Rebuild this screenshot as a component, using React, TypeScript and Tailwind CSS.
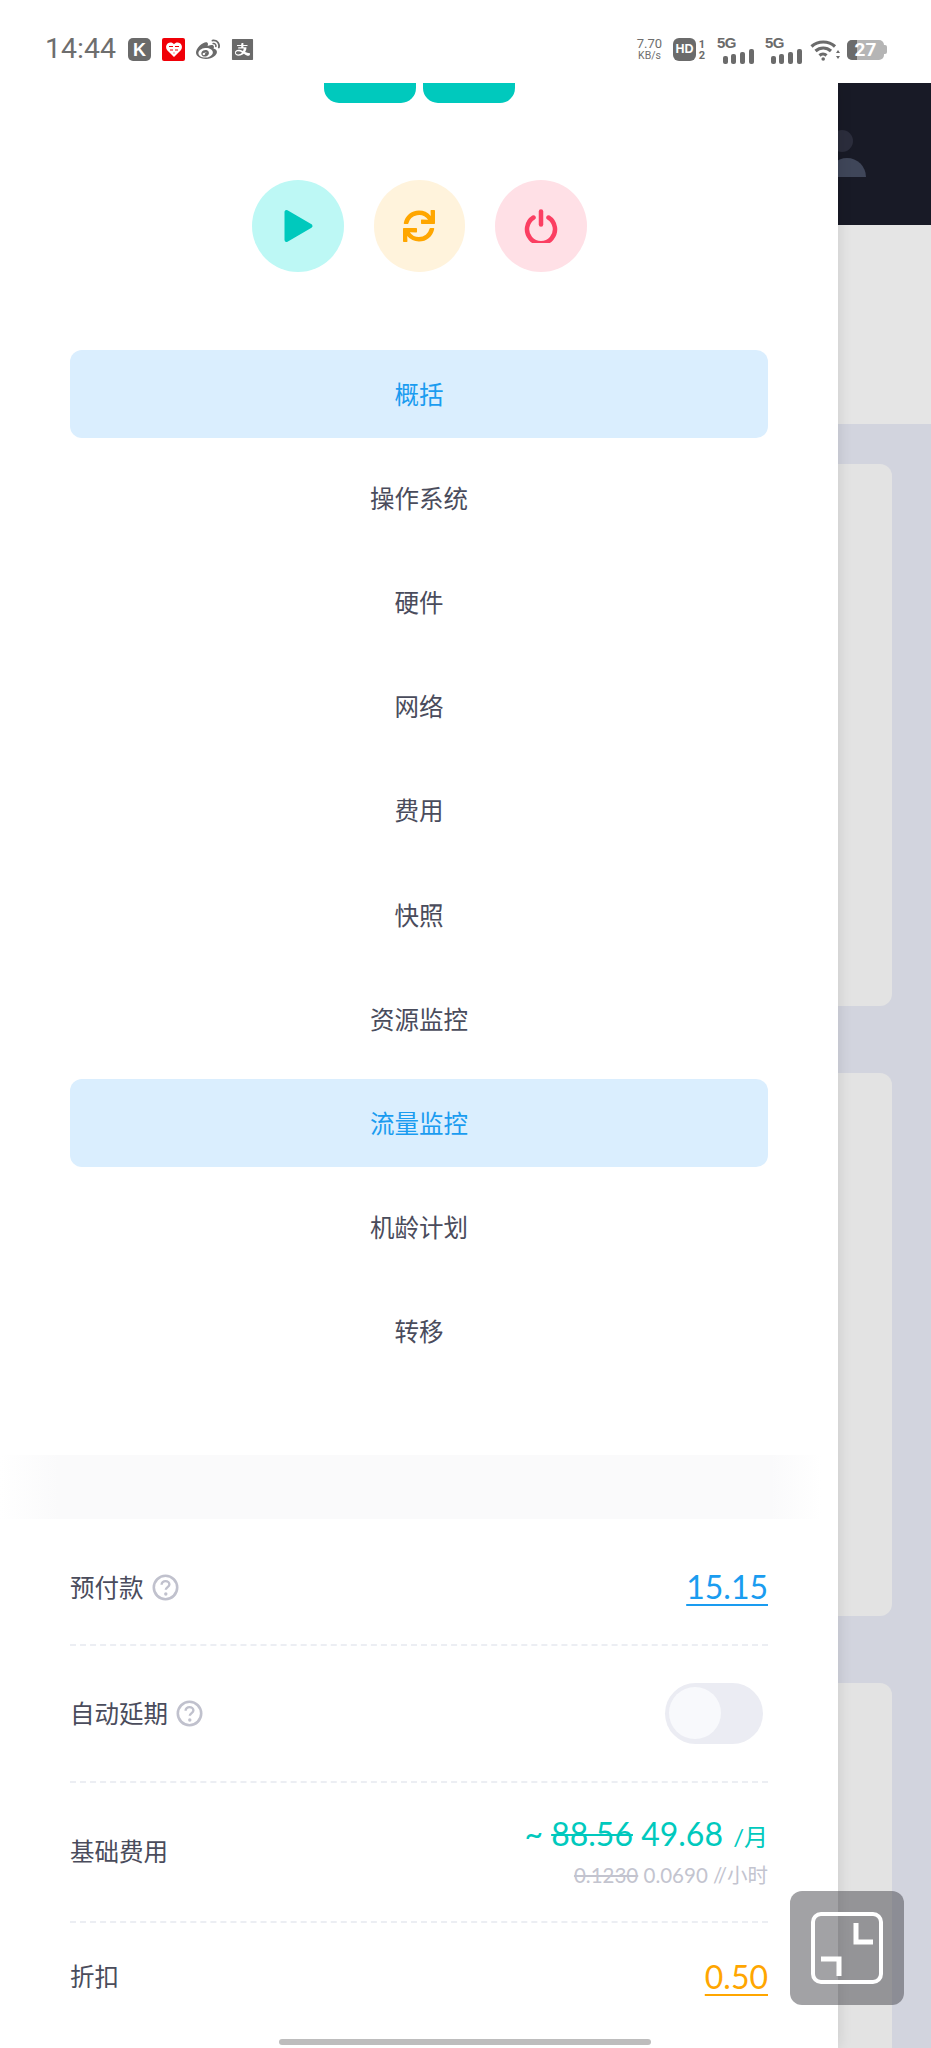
import React from "react";
import { FaSync, FaWeibo } from "react-icons/fa";
import { AiFillAlipaySquare } from "react-icons/ai";

const CJK = "font-['Noto_Sans_CJK_SC','Noto_Sans',sans-serif]";

const menu = ["概括", "操作系统", "硬件", "网络", "费用", "快照", "资源监控", "流量监控", "机龄计划", "转移"];
const activeItems = ["概括", "流量监控"];

function Help() {
  return (
    <svg width="27" height="27" viewBox="0 0 27 27" fill="none" className="shrink-0">
      <circle cx="13.5" cy="13.5" r="11.7" stroke="#c0c1cd" strokeWidth="2.6" />
      <path d="M9.6 10.8c0-2.2 1.7-3.7 3.9-3.7s3.9 1.4 3.9 3.4c0 2.6-3.6 2.7-3.6 5.3" stroke="#c0c1cd" strokeWidth="2.4" fill="none" />
      <circle cx="13.8" cy="20" r="1.7" fill="#c0c1cd" />
    </svg>
  );
}

function Bars() {
  return (
    <svg width="31" height="15" viewBox="0 0 31 15" fill="#6b6b6b">
      <rect x="0" y="7" width="5" height="8" rx="2" />
      <rect x="8" y="5" width="5" height="10" rx="2" />
      <rect x="17" y="3" width="5" height="12" rx="2" />
      <rect x="26" y="0" width="5" height="15" rx="2" />
    </svg>
  );
}

function Signal() {
  return (
    <div className="flex w-[40px] flex-col items-end">
      <span className="mr-[18px] font-['Liberation_Sans',sans-serif] text-[15px] leading-[13px] font-bold tracking-[-0.5px] text-[#6b6b6b]">5G</span>
      <Bars />
    </div>
  );
}

function StatusBar() {
  return (
    <div className="flex h-[83px] items-center justify-between bg-white pt-[16px] pr-[44px] pl-[45px] font-['Roboto',sans-serif]">
      <div className="flex items-center">
        <span className="w-[83px] text-[28.5px] leading-none text-[#6e6e6e]">14:44</span>
        <div className="flex items-center gap-[11px]">
          <div className="flex h-[23px] w-[23px] items-center justify-center rounded-[5px] bg-[#6a6a6a] font-['Liberation_Sans',sans-serif] text-[18px] leading-none font-bold text-white">K</div>
          <div className="flex h-[23px] w-[23px] items-center justify-center rounded-[2px] bg-[#f00008]">
            <svg width="16" height="15" viewBox="0 0 16 15" fill="#fff">
              <path d="M8 15 1.2 8.2C-.6 6.2-.2 2.6 2 1.2 4-.2 6.6.3 8 2.2 9.4.3 12-.2 14 1.2c2.2 1.4 2.6 5 .8 7z" />
              <path d="M3 4.5h4M9 4.5h4M4 8h3M9 8h3M7.5 11h1" stroke="#f00008" strokeWidth="1" />
            </svg>
          </div>
          <FaWeibo size={24} color="#6a6a6a" />
          <AiFillAlipaySquare size={27} color="#6a6a6a" className="-mx-[2px]" />
        </div>
      </div>
      <div className="flex items-center">
        <div className="mr-[10px] flex w-[27px] flex-col items-center leading-none text-[#6e6e6e]">
          <span className="text-[13px] leading-[12px]">7.70</span>
          <span className="text-[10.5px] leading-[11px]">KB/s</span>
        </div>
        <div className="flex h-[23px] w-[23px] items-center justify-center rounded-[6px] bg-[#6b6b6b] font-['Liberation_Sans',sans-serif] text-[12.5px] leading-none font-bold text-white">HD</div>
        <div className="mr-[8px] ml-[2px] flex w-[8px] flex-col items-center text-[11px] leading-[11px] font-bold text-[#6b6b6b]">
          <span>1</span>
          <span>2</span>
        </div>
        <Signal />
        <div className="w-[8px]" />
        <Signal />
        <svg width="30" height="22" viewBox="0 0 30 22" className="mr-[7px] ml-[8px]" fill="none" stroke="#6b6b6b" strokeWidth="3.2">
          <path d="M1.5 7.5c6.5-6 17-6 23.500 0" />
          <path d="M5.500 12c4.500-4 11-4 15.500 0" />
          <path d="M9.500 16.500c2-1.800 5-1.800 7 0" />
          <circle cx="13.200" cy="20" r="1.800" fill="#6b6b6b" stroke="none" />
          <path d="M28 11l2 3h-4zM28 20l-2-3h4z" fill="#6b6b6b" stroke="none" />
        </svg>
        <div className="flex items-center">
          <div className="relative flex h-[20px] w-[37px] items-center justify-center overflow-hidden rounded-[5px] bg-[#b5b5b5] text-[19px] leading-none font-bold text-white">
            <div className="absolute top-0 bottom-0 left-0 w-[10px] bg-[#6b6b6b]" />
            <span className="relative">27</span>
          </div>
          <div className="h-[9px] w-[3px] rounded-r-[2px] bg-[#b5b5b5]" />
        </div>
      </div>
    </div>
  );
}

function Actions() {
  return (
    <div className="mt-[77px] flex justify-center gap-[30px]">
      <div className="flex h-[92px] w-[92px] items-center justify-center rounded-full bg-[#bdf8f5]">
        <svg width="30" height="34" viewBox="0 0 30 34" className="ml-[3px]">
          <path d="M2.500 3v28l24-14z" fill="#00c9bd" stroke="#00c9bd" strokeWidth="4" strokeLinejoin="round" />
        </svg>
      </div>
      <div className="flex h-[92px] w-[91px] items-center justify-center rounded-full bg-[#fff3dc]">
        <FaSync size={32} color="#ffa600" />
      </div>
      <div className="flex h-[92px] w-[92px] items-center justify-center rounded-full bg-[#ffe0e6]">
        <svg width="34" height="34" viewBox="0 0 34 34" fill="none" stroke="#fb3f62" strokeWidth="4.500" strokeLinecap="round">
          <path d="M9.500 8.500a14 14 0 1 0 15 0" />
          <path d="M17 2.500v13" />
        </svg>
      </div>
    </div>
  );
}

function Row({ children, className }: { children: React.ReactNode; className: string }) {
  return <div className={`mx-[70px] flex items-center justify-between ${className}`}>{children}</div>;
}

function Label({ text, help }: { text: string; help?: boolean }) {
  return (
    <div className="flex items-center gap-[8px]">
      <span className={`text-[24.500px] leading-none text-[#4a4c5c] ${CJK}`}>{text}</span>
      {help && <Help />}
    </div>
  );
}

function Drawer() {
  return (
    <div className="relative z-10 flex w-[838px] shrink-0 flex-col bg-white shadow-[0_0_14px_rgba(0,0,0,0.12)]">
      <div className="flex justify-center gap-[7px]">
        <div className="h-[20px] w-[92px] rounded-b-[15px] bg-[#00c9bd]" />
        <div className="h-[20px] w-[92px] rounded-b-[15px] bg-[#00c9bd]" />
      </div>
      <Actions />
      <div className={`mx-[70px] mt-[78px] flex flex-col gap-[16.200px] text-[24.500px] ${CJK}`}>
        {menu.map((m) =>
          activeItems.includes(m) ? (
            <div key={m} className="flex h-[88px] items-center justify-center rounded-[12px] bg-[#daeefe] text-[#1a9cf0]">{m}</div>
          ) : (
            <div key={m} className="flex h-[88px] items-center justify-center text-[#4a4c5c]">{m}</div>
          ),
        )}
      </div>
      <div className="mt-[79px] h-[64px] bg-[linear-gradient(90deg,#ffffff,#fafafb_7%,#fafafb_92%,#ffffff_98%)]" />
      <Row className="h-[127px] border-b-2 border-dashed border-[#eceef3] pt-[12px]">
        <Label text="预付款" help />
        <span className="font-['Lato',sans-serif] text-[32px] leading-none text-[#1a9cf0] underline underline-offset-[5px] decoration-2">15.15</span>
      </Row>
      <Row className="h-[137px] border-b-2 border-dashed border-[#eceef3]">
        <Label text="自动延期" help />
        <div className="mr-[5px] flex h-[61px] w-[98px] items-center rounded-full bg-[#ebecf3] pl-[4px]">
          <div className="h-[52px] w-[52px] rounded-full bg-[#f8f9fc]" />
        </div>
      </Row>
      <Row className="h-[140px] border-b-2 border-dashed border-[#eceef3]">
        <Label text="基础费用" />
        <div className="flex flex-col items-end gap-[6px] font-['Lato','Noto_Sans_CJK_SC',sans-serif]">
          <div className="text-[32px] leading-[38px] text-[#00c9bd]">
            ~ <span className="line-through decoration-2">88.56</span> 49.68 <span className="ml-[2px] text-[24px]">/月</span>
          </div>
          <div className="text-[20.500px] leading-[26px] text-[#c3c4cf]">
            <span className="line-through">0.1230</span> 0.0690 //小时
          </div>
        </div>
      </Row>
      <Row className="h-[108px]">
        <Label text="折扣" />
        <span className="font-['Lato',sans-serif] text-[32px] leading-none text-[#ffa600] underline underline-offset-[5px] decoration-2">0.50</span>
      </Row>
    </div>
  );
}

function Backdrop() {
  return (
    <div className="flex min-w-0 flex-1 flex-col bg-[#d2d4de]">
      <div className="flex h-[142px] shrink-0 items-start bg-[#181a26] pt-[47px]">
        <svg width="28" height="48" viewBox="0 0 28 48" className="-ml-[0px]">
          <circle cx="4" cy="11" r="11" fill="#2b2d3c" />
          <path d="M-10 47a19 19 0 0 1 38 0z" fill="#3f4659" />
        </svg>
      </div>
      <div className="h-[199px] shrink-0 bg-[#e5e5e5]" />
      <div className="flex flex-col gap-[67px] pt-[40px] pr-[39px]">
        <div className="h-[542px] rounded-r-[12px] bg-[#e3e3e3]" />
        <div className="h-[543px] rounded-r-[12px] bg-[#e3e3e3]" />
        <div className="h-[400px] rounded-tr-[12px] bg-[#e3e3e3]" />
      </div>
    </div>
  );
}

export default function App() {
  return (
    <div className="relative h-[2048px] w-[931px] overflow-hidden bg-white font-['Noto_Sans_CJK_SC',sans-serif]">
      <StatusBar />
      <div className="flex h-[1965px] overflow-hidden">
        <Drawer />
        <Backdrop />
      </div>
      <div className="absolute top-[1891px] left-[790px] z-20 flex h-[114px] w-[114px] items-center justify-center rounded-[12px] bg-[rgba(70,70,75,0.5)]">
        <svg width="72" height="72" viewBox="0 0 72 72" fill="none" stroke="#fff" strokeWidth="4">
          <rect x="2" y="2" width="68" height="68" rx="8" />
          <path d="M45 11v19h17" strokeWidth="5" />
          <path d="M10 47h18v17" strokeWidth="5" />
        </svg>
      </div>
      <div className="absolute top-[2039px] left-[279px] z-20 h-[6px] w-[372px] rounded-full bg-[#bdbdbd]" />
    </div>
  );
}
